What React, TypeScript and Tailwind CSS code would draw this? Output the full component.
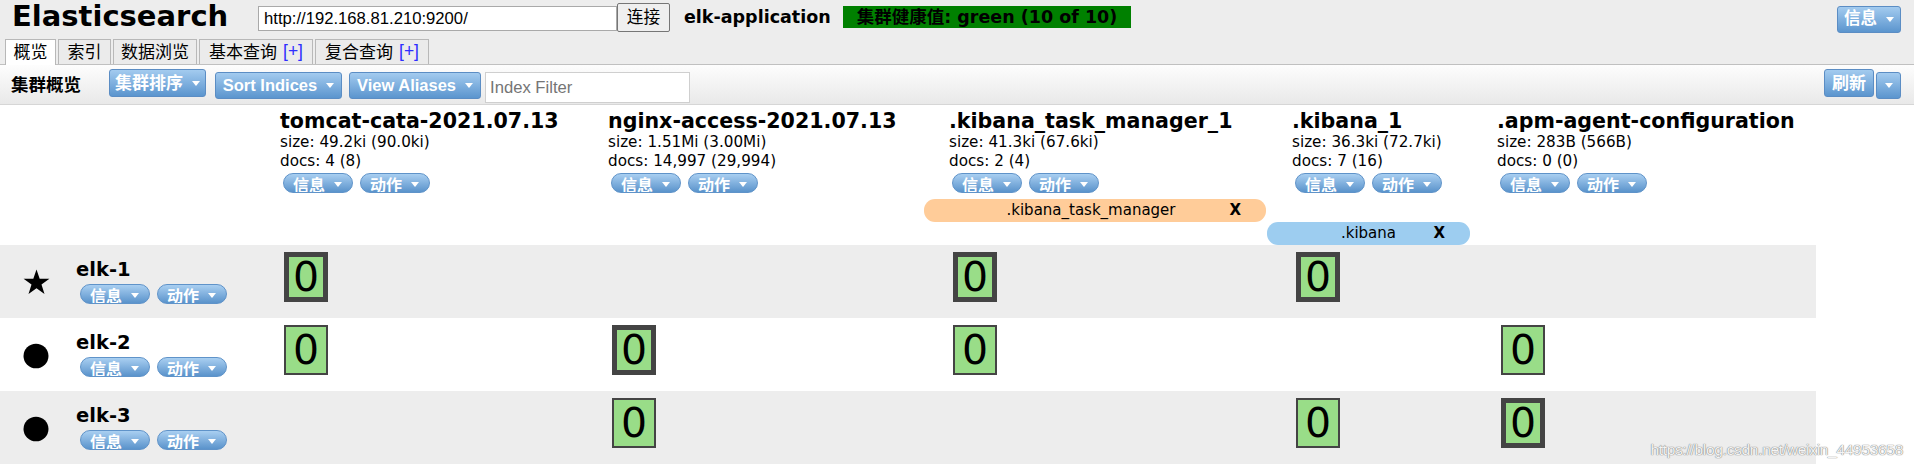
import type { ReactNode } from "react";

const SANS = "font-['DejaVu_Sans','Noto_Sans_CJK_SC',sans-serif]";
const ARIAL = "font-['Liberation_Sans','Noto_Sans_CJK_SC',sans-serif]";
const COLS = "grid grid-cols-[255px_328px_341px_343px_205px_344px]";

type Shard = "P" | "R" | null;

const indices = [
  { name: "tomcat-cata-2021.07.13", size: "size: 49.2ki (90.0ki)", docs: "docs: 4 (8)" },
  { name: "nginx-access-2021.07.13", size: "size: 1.51Mi (3.00Mi)", docs: "docs: 14,997 (29,994)" },
  { name: ".kibana_task_manager_1", size: "size: 41.3ki (67.6ki)", docs: "docs: 2 (4)" },
  { name: ".kibana_1", size: "size: 36.3ki (72.7ki)", docs: "docs: 7 (16)" },
  { name: ".apm-agent-configuration", size: "size: 283B (566B)", docs: "docs: 0 (0)" },
];

const nodes: { name: string; master: boolean; shards: Shard[]; bg: string }[] = [
  { name: "elk-1", master: true, shards: ["P", null, "P", "P", null], bg: "bg-[#ededed]" },
  { name: "elk-2", master: false, shards: ["R", "P", "R", null, "R"], bg: "bg-white" },
  { name: "elk-3", master: false, shards: [null, "R", null, "R", "P"], bg: "bg-[#ededed]" },
];

function Caret() {
  return (
    <svg width="8" height="5" viewBox="0 0 8 5" className="shrink-0">
      <path d="M0 0H8L4 5Z" fill="white" />
    </svg>
  );
}

// little rounded button under index names and node names (text sits low and gets clipped, as in head)
function Pill({ label }: { label: string }) {
  return (
    <div className="relative h-[20px] w-[70px] overflow-hidden rounded-[10px] border border-[#5f93c9] bg-linear-to-b from-[#a9cff1] to-[#5a93cb]">
      <span className="absolute left-[9px] top-[3px] text-[16px] font-bold leading-[18px] text-white">{label}</span>
      <span className="absolute right-[10px] top-[8px] flex">
        <Caret />
      </span>
    </div>
  );
}

function ToolBtn({ children, className }: { children: ReactNode; className: string }) {
  return (
    <div
      className={
        "flex items-center justify-center gap-[9px] rounded-[3px] border border-[#5b8dc4] bg-linear-to-b from-[#a3cbef] to-[#5b95ce] text-[16.5px] font-bold text-white " +
        className
      }
    >
      {children}
    </div>
  );
}

function Tab({ children, active, w }: { children: ReactNode; active?: boolean; w: string }) {
  return (
    <div
      className={
        "flex items-center justify-center border border-b-0 border-[#b8b8b8] text-[17px] leading-none " +
        w +
        (active ? " relative z-10 -mb-[1px] h-[26px] bg-white" : " h-[25px] bg-[#ebebeb]")
      }
    >
      {children}
    </div>
  );
}

function Plus() {
  return <span className={"ml-[6px] text-[17.5px] text-[#2e2eff] " + ARIAL}>[+]</span>;
}

function ShardBox({ kind }: { kind: "P" | "R" }) {
  return (
    <div
      className={
        "flex h-[50px] w-[44px] items-center justify-center bg-[#99dd88] text-[41px] leading-none text-black " +
        (kind === "P" ? "border-[5px] border-[#444]" : "border-2 border-[#444]")
      }
    >
      0
    </div>
  );
}

function Star() {
  return (
    <svg width="27" height="26" viewBox="0 0 28 27">
      <path d="M14 0.5L17.3 10.2H27.4L19.2 16.2L22.3 26L14 20L5.7 26L8.8 16.2L0.6 10.2H10.7Z" fill="black" />
    </svg>
  );
}

function Dot() {
  return (
    <svg width="26" height="26" viewBox="0 0 26 26">
      <ellipse cx="13" cy="13" rx="12.5" ry="12.3" fill="black" />
    </svg>
  );
}

export default function App() {
  return (
    <div className={"relative h-[470px] w-[1914px] overflow-hidden bg-white text-black " + SANS}>
      {/* header */}
      <div className="bg-[#ededed]">
        <div className="flex h-[39px] items-start">
          <div className="w-[258px] pl-[12px] text-[29px] font-bold leading-[32px]">Elasticsearch</div>
          <div
            className={
              "mt-[6px] flex h-[25px] w-[359px] items-center border border-[#a9a9a9] bg-white pl-[5px] text-[16.67px] " + ARIAL
            }
          >
            http://192.168.81.210:9200/
          </div>
          <div
            className={
              "mt-[3px] flex h-[29px] w-[53px] items-center justify-center rounded-[2px] border border-[#767676] bg-[#efefef] text-[16.67px] " +
              ARIAL
            }
          >
            连接
          </div>
          <div className="ml-[14px] mt-[6px] text-[17.5px] font-bold leading-[22px]">elk-application</div>
          <div className="ml-[12px] mt-[6px] h-[22px] bg-[#008000] px-[14px] text-[17.5px] font-bold leading-[22px]">
            集群健康值: green (10 of 10)
          </div>
          <ToolBtn className="ml-auto mr-[13px] mt-[6px] h-[27px] w-[64px]">
            <span className="leading-none">信息</span>
            <Caret />
          </ToolBtn>
        </div>
        <div className="flex h-[25px] items-end gap-[2px] pl-[5px]">
          <Tab active w="w-[51px]">概览</Tab>
          <Tab w="w-[53px]">索引</Tab>
          <Tab w="w-[84px]">数据浏览</Tab>
          <Tab w="w-[114px]">
            基本查询
            <Plus />
          </Tab>
          <Tab w="w-[114px]">
            复合查询
            <Plus />
          </Tab>
        </div>
      </div>

      {/* toolbar */}
      <div className="flex h-[41px] items-start border-y border-t-[#c0c0c0] border-b-[#d6d6d6] bg-linear-to-b from-[#fdfdfd] to-[#e9e9e9]">
        <div className="mt-[9px] w-[109px] pl-[11px] text-[17.5px] font-bold leading-[22px]">集群概览</div>
        <ToolBtn className="mt-[4px] h-[28px] w-[97px] text-[17px]">
          <span className="leading-none">集群排序</span>
          <Caret />
        </ToolBtn>
        <ToolBtn className={"ml-[9px] mt-[7px] h-[27px] w-[127px] " + ARIAL}>
          <span className="leading-none">Sort Indices</span>
          <Caret />
        </ToolBtn>
        <ToolBtn className={"ml-[7px] mt-[7px] h-[27px] w-[132px] " + ARIAL}>
          <span className="leading-none">View Aliases</span>
          <Caret />
        </ToolBtn>
        <div
          className={
            "ml-[4px] mt-[7px] flex h-[31px] w-[205px] items-center border border-[#cfcfcf] bg-white pl-[4px] text-[16.67px] text-[#757575] " +
            ARIAL
          }
        >
          Index Filter
        </div>
        <ToolBtn className="ml-auto mt-[4px] h-[28px] w-[50px] text-[17px]">
          <span className="leading-none">刷新</span>
        </ToolBtn>
        <ToolBtn className="ml-[2px] mr-[13px] mt-[7px] h-[27px] w-[25px]">
          <Caret />
        </ToolBtn>
      </div>

      {/* index headers */}
      <div className={COLS + " h-[94px]"}>
        <div />
        {indices.map((ix) => (
          <div key={ix.name} className="pl-[25px] pt-[5px]">
            <div className="whitespace-nowrap text-[20.6px] font-bold leading-[23px]">{ix.name}</div>
            <div className="whitespace-nowrap text-[15.2px] leading-[19px]">{ix.size}</div>
            <div className="whitespace-nowrap text-[15.2px] leading-[19px]">{ix.docs}</div>
            <div className="ml-[3px] mt-[2px] flex gap-[7px]">
              <Pill label="信息" />
              <Pill label="动作" />
            </div>
          </div>
        ))}
      </div>

      {/* aliases */}
      <div className={COLS + " grid-rows-[23px_23px]"}>
        <div className="relative col-start-4 row-start-1 mr-[1px] flex items-center justify-center rounded-[11px] bg-[#ffcc99] text-[15px]">
          <span className="-ml-[8px]">.kibana_task_manager</span>
          <span className="absolute right-[25px] font-bold">X</span>
        </div>
        <div className="relative col-start-5 row-start-2 mr-[2px] flex items-center justify-center rounded-[11px] bg-[#9dcdf0] text-[15px]">
          <span>.kibana</span>
          <span className="absolute right-[25px] font-bold">X</span>
        </div>
      </div>

      {/* nodes */}
      {nodes.map((n) => (
        <div key={n.name} className={COLS + " h-[73px] w-[1816px] " + n.bg}>
          <div className="flex">
            <div className={"flex w-[72px] items-center justify-center " + (n.master ? "" : "pt-[3px]")}>
              {n.master ? <Star /> : <Dot />}
            </div>
            <div className="ml-[4px] pt-[13px]">
              <div className="text-[19.5px] font-bold leading-[23px]">{n.name}</div>
              <div className="ml-[4px] mt-[3px] flex gap-[7px]">
                <Pill label="信息" />
                <Pill label="动作" />
              </div>
            </div>
          </div>
          {n.shards.map((s, i) => (
            <div key={i} className="pl-[29px] pt-[7px]">
              {s && <ShardBox kind={s} />}
            </div>
          ))}
        </div>
      ))}

      <div
        className={
          "absolute bottom-[9px] right-[11px] text-[15.5px] tracking-[-0.3px] text-[#f4f4f4] [text-shadow:0_0_1px_#7a7a7a,0_0_1px_#7a7a7a] " +
          ARIAL
        }
      >
        https://blog.csdn.net/weixin_44953658
      </div>
    </div>
  );
}
